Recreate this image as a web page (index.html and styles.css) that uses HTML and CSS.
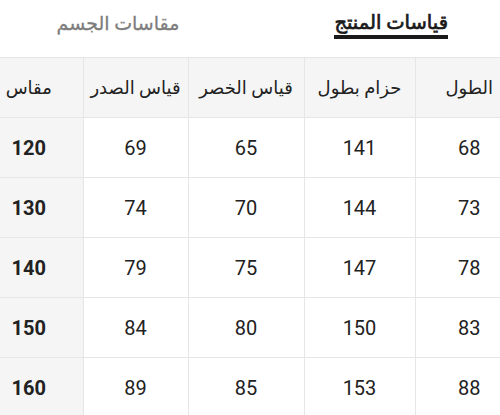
FILE: index.html
```
<!DOCTYPE html>
<html lang="ar" dir="rtl">
<head>
<meta charset="utf-8">
<link rel="stylesheet" href="styles.css">
</head>
<body>
<div class="tabs">
  <div class="tab active">قياسات المنتج</div>
  <div class="tab">مقاسات الجسم</div>
</div>
<div class="table-wrap">
<table class="sizes">
  <colgroup>
    <col class="c1"><col class="c2"><col class="c3"><col class="c4"><col class="c5">
  </colgroup>
  <thead>
    <tr><th>الطول</th><th>حزام بطول</th><th>قياس الخصر</th><th>قياس الصدر</th><th class="size">مقاس</th></tr>
  </thead>
  <tbody>
    <tr><td>68</td><td>141</td><td>65</td><td>69</td><td class="size">120</td></tr>
    <tr><td>73</td><td>144</td><td>70</td><td>74</td><td class="size">130</td></tr>
    <tr><td>78</td><td>147</td><td>75</td><td>79</td><td class="size">140</td></tr>
    <tr><td>83</td><td>150</td><td>80</td><td>84</td><td class="size">150</td></tr>
    <tr><td>88</td><td>153</td><td>85</td><td>89</td><td class="size">160</td></tr>
  </tbody>
</table>
</div>
</body>
</html>
```
FILE: styles.css
```
html, body {
  margin: 0;
  padding: 0;
  background: #fff;
}
body {
  font-family: Roboto, "DejaVu Sans", sans-serif;
  color: #222;
  width: 500px;
  height: 415px;
  overflow: hidden;
}
.tabs {
  display: flex;
  align-items: flex-start;
  height: 57px;
  padding-right: 52px;
  gap: 155px;
  box-sizing: border-box;
}
.tab {
  font-size: 19px;
  color: #7d7d7d;
  padding-top: 12px;
  line-height: 24px;
  -webkit-text-stroke: 0.3px #7d7d7d;
}
.tab.active {
  font-size: 19.5px;
  color: #1a1a1a;
  -webkit-text-stroke: 0.7px #1a1a1a;
  padding-top: 10px;
  line-height: 25px;
  border-bottom: 4px solid #1a1a1a;
}
.table-wrap {
  margin-right: -23px;
}
.sizes {
  border-collapse: collapse;
  table-layout: fixed;
  width: 548px;
}
.c1 { width: 108px; }
.c2 { width: 111px; }
.c3 { width: 116px; }
.c4 { width: 105px; }
.c5 { width: 108px; }
.sizes th, .sizes td {
  height: 59px;
  padding: 0;
  text-align: center;
  border: 1px solid #e6e6e6;
  font-size: 20px;
}
.sizes th {
  background: #f5f5f5;
  font-weight: normal;
  font-size: 18px;
  color: #222;
}
.sizes td.size {
  background: #f5f5f5;
  font-weight: bold;
}
.sizes tr > :first-child { border-right: none; }
.sizes tr > :last-child { border-left: none; }
```
